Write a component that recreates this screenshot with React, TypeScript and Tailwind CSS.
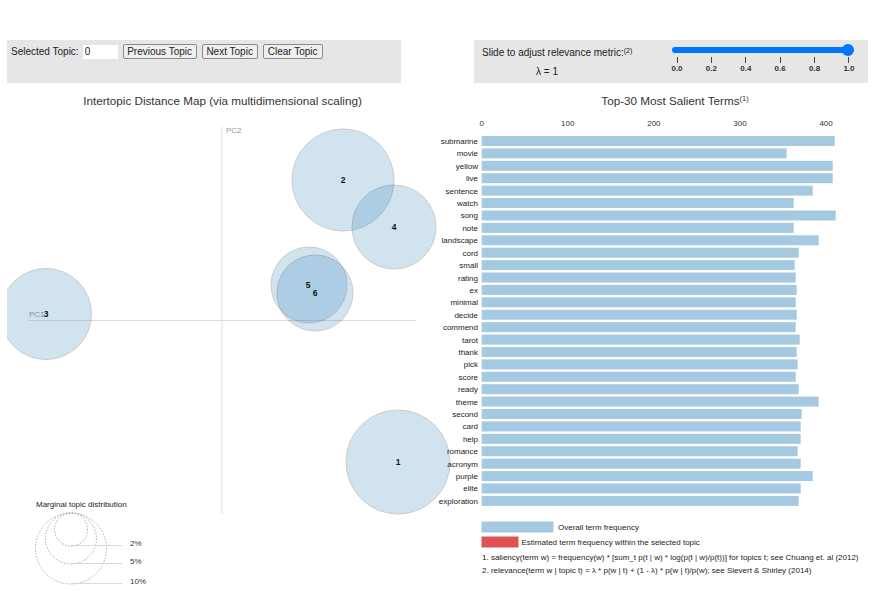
const topics = [
  { id: 1, x: 398, y: 462, r: 52 },
  { id: 2, x: 343, y: 180, r: 51 },
  { id: 3, x: 46, y: 314, r: 45.5 },
  { id: 4, x: 394, y: 227, r: 42 },
  { id: 5, x: 309, y: 285, r: 38 },
  { id: 6, x: 315, y: 293, r: 38 },
];

// label positions differ a bit from the circle centres where two topics overlap
const labelPos: Record<number, [number, number]> = {
  5: [308, 285],
  6: [315, 293],
};

const terms: [string, number][] = [
  ['submarine', 353],
  ['movie', 305],
  ['yellow', 351],
  ['live', 351],
  ['sentence', 331],
  ['watch', 312],
  ['song', 354],
  ['note', 312],
  ['landscape', 337],
  ['cord', 317],
  ['small', 313],
  ['rating', 314],
  ['ex', 315],
  ['minimal', 314],
  ['decide', 315],
  ['commend', 314],
  ['tarot', 318],
  ['thank', 315],
  ['pick', 316],
  ['score', 314],
  ['ready', 317],
  ['theme', 337],
  ['second', 320],
  ['card', 319],
  ['help', 319],
  ['romance', 316],
  ['acronym', 319],
  ['purple', 331],
  ['elite', 319],
  ['exploration', 317],
];

const ticks = ['0.0', '0.2', '0.4', '0.6', '0.8', '1.0'];

export default function App() {
  return (
    <div className="h-[591px] w-[875px] overflow-hidden bg-white pt-[40px] font-['Liberation_Sans',Arial,sans-serif] text-[#222]">
      <div className="flex">
        <TopicControls />
        <RelevanceSlider />
      </div>

      <div className="mt-[11px] flex">
        <div className="ml-[7px] w-[431px]">
          <h2 className="text-center text-[11.7px] leading-[14px] text-[#333]">
            Intertopic Distance Map (via multidimensional scaling)
          </h2>
          <TopicMap />
        </div>
        <div className="w-[437px]">
          <h2 className="pl-[37px] text-center text-[11.7px] leading-[14px] text-[#333]">
            Top-30 Most Salient Terms<sup className="text-[7.5px]">(1)</sup>
          </h2>
          <TermBars />
        </div>
      </div>
    </div>
  );
}

function TopicControls() {
  return (
    <div className="ml-[7px] h-[43px] w-[394px] bg-[#e6e6e6] pl-[4px] pt-[4px]">
      <div className="flex items-center text-[10px] leading-[12px]">
        <span>Selected Topic:</span>
        <input
          readOnly
          value="0"
          className="ml-[4px] h-[14px] w-[35px] bg-white px-[2px] text-[10px] outline-none"
        />
        <button className="ml-[5px] h-[15px] w-[74px] rounded-[2px] border border-[#8a8a8a] bg-[#efefef] text-[10px] leading-[12px]">
          Previous Topic
        </button>
        <button className="ml-[5px] h-[15px] w-[56px] rounded-[2px] border border-[#8a8a8a] bg-[#efefef] text-[10px] leading-[12px]">
          Next Topic
        </button>
        <button className="ml-[5px] h-[15px] w-[60px] rounded-[2px] border border-[#8a8a8a] bg-[#efefef] text-[10px] leading-[12px]">
          Clear Topic
        </button>
      </div>
    </div>
  );
}

function RelevanceSlider() {
  return (
    <div className="ml-[73px] flex h-[43px] w-[394px] bg-[#e6e6e6]">
      <div className="w-[190px] pl-[8px] pt-[7px] text-[10px] leading-[12px]">
        <div>
          Slide to adjust relevance metric:<sup className="text-[7px]">(2)</sup>
        </div>
        <div className="mt-[7px] pl-[54px]">λ = 1</div>
      </div>
      <div className="ml-[8px] pt-[7px]">
        <div className="relative h-[6px] w-[180px] rounded-full bg-[#0075ff]">
          <div className="absolute right-[-2px] top-1/2 h-[12px] w-[12px] -translate-y-1/2 rounded-full bg-[#0075ff]" />
        </div>
        <div className="-ml-[1px] mt-[4px] flex w-[184px] justify-between">
          {ticks.map((t) => (
            <div key={t} className="flex w-[12px] flex-col items-center">
              <div className="h-[6px] w-px bg-[#444]" />
              <span className="mt-[1px] text-[8px] font-bold leading-[9px] text-[#333]">{t}</span>
            </div>
          ))}
        </div>
      </div>
    </div>
  );
}

function TopicMap() {
  // wider than its column so topic 1 can spill under the term labels
  return (
    <svg width={446} height={483} viewBox="7 108 446 483">
      <line x1={222} y1={127} x2={222} y2={514} stroke="#dcdcdc" />
      <line x1={29} y1={320.5} x2={416} y2={320.5} stroke="#dcdcdc" />
      <text x={226} y={133} fontSize={8} fill="#999">
        PC2
      </text>
      <text x={29} y={317} fontSize={8} fill="#999">
        PC1
      </text>

      {topics.map((t) => (
        <circle key={t.id} cx={t.x} cy={t.y} r={t.r} fill="#1f77b4" stroke="black" opacity={0.2} />
      ))}
      {topics.map((t) => {
        const [lx, ly] = labelPos[t.id] ?? [t.x, t.y];
        return (
          <text key={t.id} x={lx} y={ly + 3} textAnchor="middle" fontSize={8.5} fontWeight="bold" fill="#111">
            {t.id}
          </text>
        );
      })}

      {/* marginal topic distribution legend */}
      <text x={36} y={507} fontSize={8} fill="#222">
        Marginal topic distribution
      </text>
      <g fill="none" stroke="#999" strokeDasharray="1.5 1.5" strokeWidth={0.8}>
        <circle cx={71} cy={548.5} r={35.5} />
        <circle cx={71} cy={538.5} r={25.5} />
        <circle cx={71} cy={529.5} r={16.5} />
      </g>
      <g stroke="#cfcfcf" strokeWidth={0.8}>
        <line x1={71} y1={545.5} x2={122} y2={545.5} />
        <line x1={71} y1={563.5} x2={122} y2={563.5} />
        <line x1={71} y1={583.5} x2={122} y2={583.5} />
      </g>
      <g fontSize={8} fill="#333">
        <text x={130} y={545.5}>2%</text>
        <text x={130} y={564}>5%</text>
        <text x={130} y={584}>10%</text>
      </g>
    </svg>
  );
}

function TermBars() {
  const x0 = 481.7;
  const step = 12.41;
  return (
    <svg width={437} height={483} viewBox="438 108 437 483">
      <g fontSize={8} fill="#333" textAnchor="middle">
        {[0, 100, 200, 300, 400].map((v) => (
          <text key={v} x={x0 + v * 0.861} y={125.5}>
            {v}
          </text>
        ))}
      </g>

      {terms.map(([term, w], i) => {
        const top = 136 + i * step;
        return (
          <g key={term}>
            <rect x={x0} y={top} width={w} height={10} fill="#a5c9e1" />
            <text x={478} y={top + 8} fontSize={8} textAnchor="end" fill="#222">
              {term}
            </text>
          </g>
        );
      })}

      <rect x={481.5} y={521.5} width={72} height={11} fill="#a5c9e1" />
      <text x={558} y={530} fontSize={8} fill="#222">
        Overall term frequency
      </text>
      <rect x={481.5} y={536.5} width={37} height={11} fill="#d62728" opacity={0.8} />
      <text x={521.5} y={545} fontSize={8} fill="#222">
        Estimated term frequency within the selected topic
      </text>

      <text x={482} y={560} fontSize={8} fill="#222">
        1. saliency(term w) = frequency(w) * [sum_t p(t | w) * log(p(t | w)/p(t))] for topics t; see Chuang et. al (2012)
      </text>
      <text x={482} y={572.5} fontSize={8} fill="#222">
        2. relevance(term w | topic t) = λ * p(w | t) + (1 - λ) * p(w | t)/p(w); see Sievert &amp; Shirley (2014)
      </text>
    </svg>
  );
}
